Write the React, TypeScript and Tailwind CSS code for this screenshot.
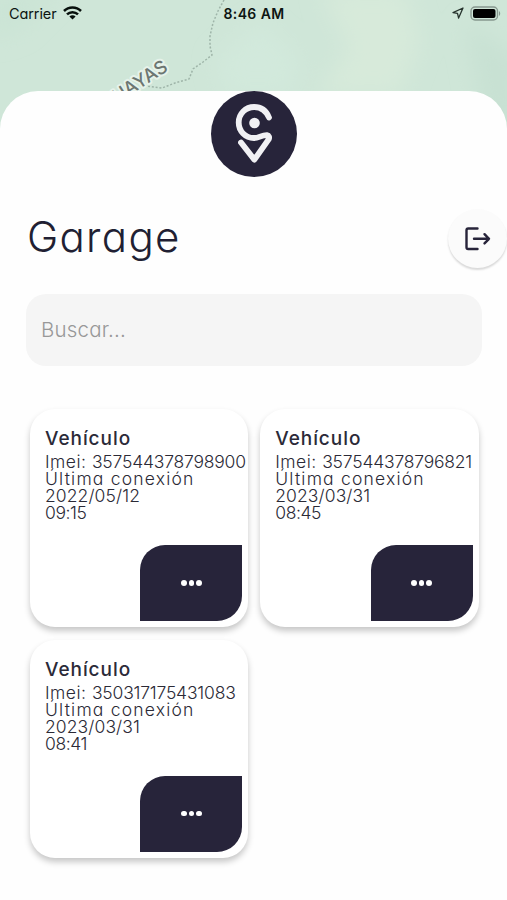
import React from 'react';

interface Vehicle {
  imei: string;
  date: string;
  time: string;
}

const vehicles: Vehicle[] = [
  { imei: '357544378798900', date: '2022/05/12', time: '09:15' },
  { imei: '357544378796821', date: '2023/03/31', time: '08:45' },
  { imei: '350317175431083', date: '2023/03/31', time: '08:41' },
];

function MapBackground() {
  return (
    <svg className="absolute inset-x-0 top-0" width="507" height="130" viewBox="0 0 507 130" aria-hidden="true">
      <defs>
        <filter id="soft" x="-30%" y="-30%" width="160%" height="160%">
          <feGaussianBlur stdDeviation="11" />
        </filter>
      </defs>
      <rect width="507" height="130" fill="#cfe6d8" />
      <g filter="url(#soft)">
        <path d="M320 -10H405L420 40L400 95H315L350 50Z" fill="#d7eada" />
        <path d="M465 20L520 60V130H485Z" fill="#c8e1d3" />
        <path d="M-10 -10H60L20 30L-10 40Z" fill="#cbe4d5" />
        <path d="M215 60L260 20L300 60L290 95H225Z" fill="#d2e9dc" />
      </g>
      <path
        d="M224 0L218 11L213 23L210 36V46L212 55L203 62L193 69L189 79L175 83L162 88L147 86"
        fill="none"
        stroke="#9fb5a9"
        strokeWidth="1.5"
        strokeDasharray="2 1.8"
      />
      <text
        transform="translate(169 70) rotate(-33)"
        textAnchor="end"
        fontFamily="Inter, sans-serif"
        fontSize="18.5"
        fontWeight="500"
        fill="#6c7672"
        stroke="#e6f2ea"
        strokeWidth="4"
        strokeLinejoin="round"
        paintOrder="stroke"
      >
        UAYAS
      </text>
    </svg>
  );
}

function StatusBar() {
  return (
    <div className="relative grid h-[28px] grid-cols-3 items-center pl-[9px] pr-[6px] text-[15px] text-[#0d1512]">
      <div className="flex items-center gap-[6px]">
        <span className="text-[14.5px] tracking-[-0.1px]">Carrier</span>
        <svg className="-mt-[2px]" width="19" height="14" viewBox="0 0 19 14" fill="none" stroke="#07100c" strokeWidth="2.5">
          <path d="M1 5C5.7 .3 13.3 .3 18 5" />
          <path d="M4 8.4C7 5.4 12 5.4 15 8.4" />
          <path d="M9.5 13.6L6.4 10.5C8.2 8.9 10.8 8.9 12.6 10.5Z" fill="#07100c" stroke="none" />
        </svg>
      </div>
      <span className="-ml-[2px] -mt-[2px] whitespace-nowrap text-center text-[14px] font-semibold tracking-[0.4px]">8:46 AM</span>
      <div className="-mt-[2px] flex items-center justify-end gap-[6px]">
        <svg width="12" height="12" viewBox="0 0 12 12" fill="none" stroke="#26332d" strokeWidth="1.3" strokeLinejoin="round">
          <path d="M11 1L1 5.6L5.5 6.4L6.6 11Z" />
        </svg>
        <svg width="31" height="15" viewBox="0 0 31 15">
          <rect x="1" y="1" width="26.5" height="13" rx="4" fill="none" stroke="#87988f" strokeWidth="1.4" />
          <rect x="3" y="3" width="22.5" height="9" rx="2" fill="#000" />
          <path d="M29 5C30.6 6 30.6 9 29 10Z" fill="#87988f" />
        </svg>
      </div>
    </div>
  );
}

function Logo() {
  return (
    <svg className="mx-auto block" width="86" height="86" viewBox="0 0 86 86">
      <circle cx="43" cy="43" r="43" fill="#27243a" />
      <circle cx="43.5" cy="32" r="5.3" fill="#f1f1f4" />
      <path
        d="M58 26.5C55.2 19.8 49.6 16 43.2 16C34.4 16 27.7 23 27.7 31.5C27.7 40.1 34.4 47 42.8 47C48 47 50.5 44 56 44.2C58 44.5 58.6 46.2 57.8 48.2L43.4 68.6L30 51.5"
        fill="none"
        stroke="#f1f1f4"
        strokeWidth="5.8"
        strokeLinecap="round"
        strokeLinejoin="round"
      />
    </svg>
  );
}

function VehicleCard({ vehicle }: { vehicle: Vehicle }) {
  return (
    <article className="flex h-[218px] flex-col rounded-[25px] bg-white pl-[15px] pr-[6px] pb-[6px] pt-[18px] shadow-[0_4px_6px_rgba(0,0,0,0.22)]">
      <h2 className="h-[26px] text-[19px] font-medium leading-[24px] tracking-[0.95px] text-[#2b2a38]">Vehículo</h2>
      <div className="whitespace-nowrap text-[17.5px] font-light leading-[17px] text-[#2b2a36]">
        <p>
          <span className="tracking-[0.5px]">Imei: </span>
          <span className="tracking-[-0.2px]">{vehicle.imei}</span>
        </p>
        <p className="tracking-[1.2px]">Última conexión</p>
        <p className="tracking-[0.1px]">{vehicle.date}</p>
        <p className="tracking-[-0.4px]">{vehicle.time}</p>
      </div>
      <button className="mt-auto flex h-[76px] w-[102px] items-center justify-center gap-[2px] self-end rounded-br-[25px] rounded-tl-[25px] bg-[#27243a]">
        <span className="size-[5.5px] rounded-full bg-white" />
        <span className="size-[5.5px] rounded-full bg-white" />
        <span className="size-[5.5px] rounded-full bg-white" />
      </button>
    </article>
  );
}

export default function App() {
  return (
    <div className="relative flex h-[900px] w-[507px] flex-col overflow-hidden bg-white font-['Inter',sans-serif] [font-feature-settings:'cv11']">
      <MapBackground />
      <StatusBar />

      <main className="relative mt-[63px] flex-1 rounded-t-[38px] bg-[#fefefe]">
        <Logo />

        {/* Title and logout */}
        <header className="mt-[31px] flex h-[60px] items-center justify-between pl-[27px]">
          <h1 className="-mt-[3px] text-[42px] font-light leading-[56px] tracking-[1.3px] text-[#211f33]">Garage</h1>
          <button className="flex size-[59px] items-center justify-center rounded-full bg-[#fbfbfb] shadow-[0_2px_2px_rgba(0,0,0,0.15)]">
            <svg className="mt-[2px]" width="26" height="24" viewBox="0 0 26 24" fill="none" stroke="#27243a" strokeWidth="2.4" strokeLinecap="round" strokeLinejoin="round">
              <path d="M12.5 1.5H3.2Q1.5 1.5 1.5 3.2V20.3Q1.5 22 3.2 22H12.5" />
              <path d="M9 11.8H24M19.5 7.2L24 11.8L19.5 16.4" />
            </svg>
          </button>
        </header>

        <input
          className="ml-[26px] mt-[26px] block h-[72px] w-[456px] rounded-[20px] bg-[#f5f5f5] px-[15px] pb-[2px] text-[20.5px] font-light tracking-[0.2px] placeholder:text-[#989898]"
          placeholder="Buscar..."
        />

        {/* Vehicles */}
        <section className="ml-[30px] mt-[43px] grid w-[448.5px] grid-cols-2 gap-x-[12px] gap-y-[12.5px]">
          {vehicles.map((vehicle) => (
            <VehicleCard key={vehicle.imei} vehicle={vehicle} />
          ))}
        </section>
      </main>
    </div>
  );
}
